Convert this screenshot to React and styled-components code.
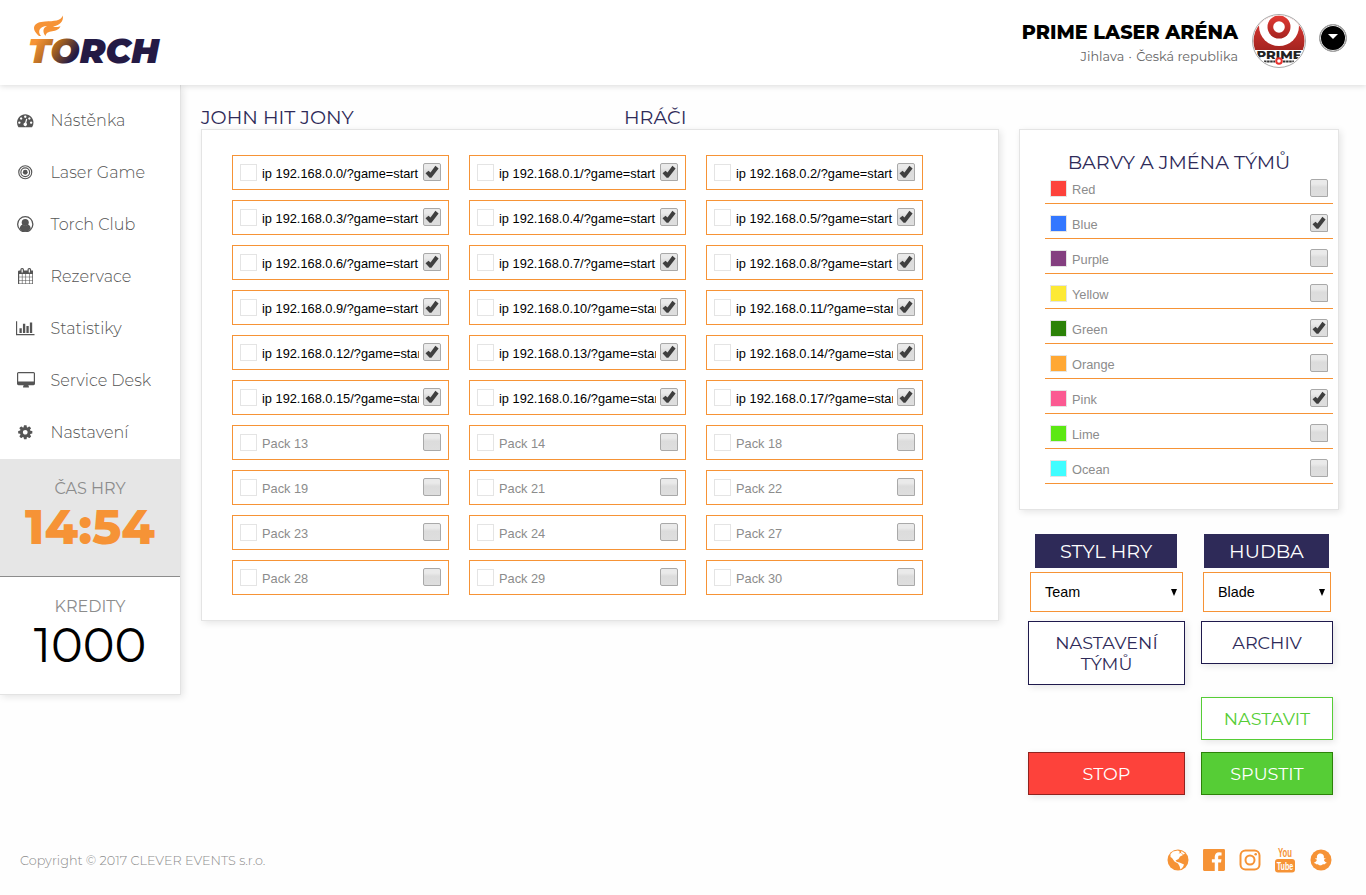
import React from 'react';
import styled, { createGlobalStyle } from 'styled-components';
import { FaSnapchatGhost } from 'react-icons/fa';

const GlobalStyle = createGlobalStyle`
  * { box-sizing: border-box; }
  body {
    margin: 0;
    background: #fefefe;
    font-family: Montserrat, Inter, sans-serif;
    font-size: 16px;
  }
`;

const arial = '"Liberation Sans", Arial, sans-serif';

const Page = styled.div`
  display: flex;
  flex-direction: column;
  height: 895px;
  overflow: hidden;
`;

const Header = styled.header`
  display: flex;
  flex: none;
  height: 85px;
  padding: 0 19px 0 28px;
  background: #fff;
  box-shadow: 0 1px 6px rgba(0, 0, 0, 0.15);
  z-index: 1;
`;

const Logo = styled.svg`
  width: 136px;
  height: 52px;
  margin-top: 14px;
  overflow: visible;
`;

const LogoText = styled.text`
  font: italic 900 34px Montserrat, Inter, sans-serif;
`;

const Venue = styled.div`
  margin: 20px 14px 0 auto;
  text-align: right;
`;

const VenueName = styled.div`
  font-size: 19.2px;
  line-height: 24px;
  font-weight: 800;
  color: #000;
`;

const VenuePlace = styled.div`
  margin-top: 5px;
  font-size: 12.8px;
  line-height: 16px;
  font-weight: 400;
  color: #666;
`;

const Dot = styled.span`
  margin: 0 1px;
`;

const Avatar = styled.svg`
  width: 54px;
  height: 54px;
  margin-top: 14px;
`;

const AvatarText = styled.text`
  font: 800 10.5px Montserrat, sans-serif;
`;

const MenuButton = styled.button`
  display: flex;
  justify-content: center;
  width: 28px;
  height: 28px;
  margin: 24px 0 0 13px;
  padding: 9px 0 0;
  border: 1px solid #aaa;
  border-radius: 50%;
  background: #000;
  box-shadow: inset 0 0 0 1px #e8e8e8;
`;

const Caret = styled.span`
  border: 5px solid transparent;
  border-top-color: #fff;
  border-bottom: 0;
  height: 0;
`;

const Body = styled.div`
  display: flex;
  align-items: flex-start;
  height: 752px;
`;

const Sidebar = styled.aside`
  width: 181px;
  flex: none;
  height: 610px;
  background: #fff;
  border: solid #e3e3e3;
  border-width: 0 1px 1px 0;
  box-shadow: 2px 2px 7px rgba(0, 0, 0, 0.1);
`;

const Nav = styled.nav`
  display: flex;
  flex-direction: column;
  height: 374px;
  padding-top: 9px;
`;

const NavItem = styled.a`
  display: flex;
  align-items: center;
  height: 52px;
  padding-top: 1px;
  color: #555;
  font-weight: 300;
  line-height: 21px;
`;

const NavIcon = styled.svg`
  width: ${(p) => p.$width}px;
  height: ${(p) => p.$height}px;
  margin: 0 ${(p) => 25 - p.$width / 2}px 1px ${(p) => 25.5 - p.$width / 2}px;
  fill: #555;
`;

const Stat = styled.section`
  height: ${(p) => (p.$active ? 118 : 117)}px;
  padding-top: 20px;
  text-align: center;
  background: ${(p) => (p.$active ? '#e6e6e6' : '#fff')};
  border-bottom: ${(p) => (p.$active ? '1px solid #8c8c8c' : '0')};
`;

const StatLabel = styled.div`
  line-height: 19px;
  font-size: 16px;
  color: #8c8c8c;
`;

const StatValue = styled.div`
  font-size: 48px;
  line-height: 58px;
  font-weight: ${(p) => (p.$bold ? 800 : 400)};
  color: ${(p) => (p.$bold ? '#f69336' : '#000')};
`;

const Main = styled.main`
  width: 798px;
  margin: 20px 20px 0 20px;
`;

const Heading = styled.h2`
  margin: 0;
  font-size: 19.2px;
  line-height: 24px;
  font-weight: 400;
  color: #2e2a58;
`;

const Titles = styled.div`
  display: grid;
  grid-template-columns: 423px 1fr;
`;

const Panel = styled.section`
  background: #fff;
  border: 1px solid #e4e4e4;
  box-shadow: 2px 2px 7px rgba(0, 0, 0, 0.1);
`;

const PackPanel = styled(Panel)`
  display: grid;
  grid-template-columns: repeat(3, 217px);
  grid-auto-rows: 35px;
  gap: 10px 20px;
  height: 492px;
  padding: 25px 30px;
`;

const Pack = styled.div`
  display: flex;
  align-items: center;
  padding: 0 7px;
  border: 1px solid #f69336;
`;

const Swatch = styled.span`
  flex: none;
  width: 17px;
  height: 17px;
  background: ${(p) => p.$color || '#fff'};
  border: 1px solid #e4e4e4;
`;

const ItemName = styled.span`
  flex: 1;
  overflow: hidden;
  margin: 2px 4px 0 5px;
  white-space: nowrap;
  font: 12.8px/18px ${arial};
  color: ${(p) => (p.$active ? '#000' : '#8c8c8c')};
`;

const Box = styled.span`
  flex: none;
  display: flex;
  width: 18px;
  height: 18px;
  margin-bottom: 2px;
  border: 1px solid #a9a9a9;
  border-radius: 2px;
  border-bottom-right-radius: 0;
  background: linear-gradient(#eaeaea 0%, #eaeaea 25%, #dcdcdc 45%, #dedede 100%);
`;

const Check = ({ on }) => (
  <Box>
    {on && (
      <svg width="16" height="16" viewBox="0 0 16 16" fill="#3f3f3f">
        <path d="M1.500 9.300 4.500 6.700 6.500 8.600 11.400 1.800 14.600 4.400 7.400 13.800H5.600Z" />
      </svg>
    )}
  </Box>
);

const Side = styled.aside`
  width: 320px;
  padding-top: 44px;
`;

const TeamPanel = styled(Panel)`
  height: 381px;
  padding: 20px 5px 0 25px;
`;

const TeamTitle = styled(Heading)`
  margin-right: 20px;
  height: 19px;
  text-align: center;
`;

const Team = styled.div`
  display: flex;
  align-items: center;
  height: 35px;
  padding: 5px 5px 0 5px;
  border-bottom: 1px solid #f69336;
`;

const Controls = styled.div`
  display: grid;
  grid-template-columns: 157px 132px;
  column-gap: 16px;
  margin: 24px 0 0 9px;
  align-items: start;
  justify-items: center;
`;

const Tag = styled.div`
  width: ${(p) => p.$width}px;
  height: 34px;
  margin: 0 1px 4px 0;
  text-align: center;
  font-size: 19.2px;
  line-height: 35px;
  color: #fff;
  background: #2e2a58;
`;

const Select = styled.div`
  display: flex;
  justify-content: space-between;
  align-items: center;
  width: ${(p) => p.$width}px;
  height: 40px;
  margin-bottom: 9px;
  padding: 0 5px 0 14px;
  border: 1px solid #f69336;
  background: #fff;
  font: 14.4px ${arial};
  color: #000;
`;

const Arrow = styled.svg`
  width: 6px;
  height: 7px;
`;

const tones = {
  navy: ['#fff', '#1f1a4d', '#2e2a58'],
  outline: ['#fff', '#56cd36', '#56cd36'],
  red: ['#fd423b', '#8f231f', '#fff'],
  green: ['#56cd36', '#2c8208', '#fff'],
};

const Button = styled.button`
  width: 100%;
  min-height: 43px;
  margin: 0 0 12px;
  padding: 10px 20px;
  font: 400 17.6px/21px Montserrat, Inter, sans-serif;
  background: ${(p) => tones[p.$tone][0]};
  border: 1px solid ${(p) => tones[p.$tone][1]};
  color: ${(p) => tones[p.$tone][2]};
  box-shadow: 2px 2px 7px rgba(0, 0, 0, 0.1);
  grid-column: ${(p) => p.$col || 'auto'};
`;

const Footer = styled.footer`
  display: flex;
  justify-content: space-between;
  padding: 8px 34px 0 20px;
  color: #8c8c8c;
  font-size: 12.8px;
  line-height: 32px;
  font-weight: 300;
`;

const Social = styled.div`
  display: flex;
  align-items: center;
  gap: 13.700px;
  height: 30px;
`;

const SocialIcon = styled.svg`
  width: 22px;
  height: 26px;
  fill: #f69336;
`;

const TubeText = styled.text`
  font: bold ${(p) => p.$size}px "Liberation Sans Narrow", ${arial};
`;

const icons = {
  dash: <path d="M384 1152q0-53-37.500-90.500t-90.500-37.500-90.500 37.500-37.500 90.500 37.500 90.500 90.500 37.500 90.500-37.500 37.500-90.500zm192-448q0-53-37.500-90.500t-90.500-37.500-90.500 37.500-37.500 90.500 37.500 90.500 90.500 37.500 90.500-37.500 37.500-90.500zm428 481l101-382q6-26-7.500-48.500t-38.500-29.500-48 6.500-30 39.500l-101 382q-60 5-107 43.500t-63 98.500q-20 77 20 146t117 89 146-20 89-117q16-60-6-117t-72-91zm660-33q0-53-37.500-90.500t-90.500-37.500-90.500 37.500-37.500 90.500 37.500 90.500 90.500 37.500 90.500-37.500 37.500-90.500zm-640-640q0-53-37.500-90.500t-90.500-37.500-90.500 37.500-37.500 90.500 37.500 90.500 90.500 37.500 90.500-37.500 37.500-90.500zm448 192q0-53-37.500-90.500t-90.500-37.500-90.500 37.500-37.500 90.500 37.500 90.500 90.500 37.500 90.500-37.500 37.500-90.500zm320 448q0 261-141 483-19 29-54 29h-1402q-35 0-54-29-141-221-141-483 0-182 71-348t191-286 286-191 348-71 348 71 286 191 191 286 71 348z" />,
  target: (
    <g fill="none" stroke="#555" strokeWidth="125">
      <circle cx="896" cy="896" r="705" />
      <circle cx="896" cy="896" r="475" />
      <circle cx="896" cy="896" r="260" fill="#555" stroke="none" />
    </g>
  ),
  user: (
    <g>
      <circle cx="896" cy="896" r="825" fill="none" stroke="#555" strokeWidth="140" />
      <circle cx="896" cy="704" r="385" />
      <path d="M300 1390q30-400 310-430 286 230 572 0 280 30 310 430-200 310-596 310t-596-310z" />
    </g>
  ),
  calendar: <path d="M192 1664h288v-288h-288v288zm352 0h320v-288h-320v288zm-352-352h288v-320h-288v320zm352 0h320v-320h-320v320zm-352-384h288v-288h-288v288zm736 736h320v-288h-320v288zm-384-736h320v-288h-320v288zm768 736h288v-288h-288v288zm-384-352h320v-320h-320v320zm-352-864v-288q0-13-9.500-22.500t-22.500-9.500h-64q-13 0-22.500 9.500t-9.500 22.500v288q0 13 9.500 22.500t22.500 9.500h64q13 0 22.500-9.500t9.500-22.500zm736 864h288v-320h-288v320zm-384-384h320v-288h-320v288zm384 0h288v-288h-288v288zm32-480v-288q0-13-9.500-22.500t-22.500-9.500h-64q-13 0-22.500 9.500t-9.500 22.500v288q0 13 9.500 22.500t22.500 9.500h64q13 0 22.500-9.500t9.500-22.500zm384-64v1280q0 52-38 90t-90 38h-1408q-52 0-90-38t-38-90v-1280q0-52 38-90t90-38h128v-96q0-66 47-113t113-47h64q66 0 113 47t47 113v96h384v-96q0-66 47-113t113-47h64q66 0 113 47t47 113v96h128q52 0 90 38t38 90z" />,
  chart: <path d="M640 896v512h-256v-512h256zm384-512v1024h-256v-1024h256zm1024 1152v128h-2048v-1536h128v1408h1920zm-640-896v768h-256v-768h256zm384-384v1152h-256v-1152h256z" />,
  desktop: <path d="M1728 992v-832q0-13-9.500-22.500t-22.500-9.500h-1600q-13 0-22.500 9.500t-9.500 22.500v832q0 13 9.500 22.500t22.500 9.500h1600q13 0 22.500-9.500t9.500-22.500zm128-832v1088q0 66-47 113t-113 47h-544q0 37 16 77.500t32 71 16 43.500q0 26-19 45t-45 19h-512q-26 0-45-19t-19-45q0-14 16-44t32-70 16-78h-544q-66 0-113-47t-47-113v-1088q0-66 47-113t113-47h1600q66 0 113 47t47 113z" />,
  cog: <path d="M1152 896q0-106-75-181t-181-75-181 75-75 181 75 181 181 75 181-75 75-181zm512-109v222q0 12-8 23t-20 13l-185 28q-19 54-39 91 35 50 107 138 10 12 10 25t-9 23q-27 37-99 108t-94 71q-12 0-26-9l-138-108q-44 23-91 38-16 136-29 186-7 28-36 28h-222q-14 0-24.500-8.500t-11.500-21.500l-28-184q-49-16-90-37l-141 107q-10 9-25 9-14 0-25-11-126-114-165-168-7-10-7-23 0-12 8-23 15-21 51-66.500t54-70.500q-27-50-41-99l-183-27q-13-2-21-12.500t-8-23.500v-222q0-12 8-23t19-13l186-28q14-46 39-92-40-57-107-138-10-12-10-24 0-10 9-23 26-36 98.500-107.500t94.500-71.500q13 0 26 10l138 107q44-23 91-38 16-136 29-186 7-28 36-28h222q14 0 24.500 8.500t11.500 21.500l28 184q49 16 90 37l142-107q9-9 24-9 13 0 25 10 129 119 165 170 7 8 7 22 0 12-8 23-15 21-51 66.500t-54 70.500q26 50 41 98l183 28q13 2 21 12.500t8 23.500z" />,
};

const nav = [
  ['Nástěnka', 'dash', '0 0 1792 1664', 16.5, 15.3],
  ['Laser Game', 'target', '0 0 1792 1792', 16.5, 16.5],
  ['Torch Club', 'user', '0 0 1792 1792', 16.5, 16.5],
  ['Rezervace', 'calendar', '64 0 1664 1792', 15.5, 16.7],
  ['Statistiky', 'chart', '0 0 2048 1792', 18.5, 16.5],
  ['Service Desk', 'desktop', '-64 0 1920 1664', 18, 15.6],
  ['Nastavení', 'cog', '0 0 1792 1792', 16.5, 16.5],
];

const packs = [
  ...Array.from({ length: 18 }, (_, i) => [`ip 192.168.0.${i}/?game=start`, true]),
  ...[13, 14, 18, 19, 21, 22, 23, 24, 27, 28, 29, 30].map((n) => [`Pack ${n}`, false]),
];

const teams = [
  ['Red', '#fd423b'],
  ['Blue', '#3377ff', true],
  ['Purple', '#843f80'],
  ['Yellow', '#fde935'],
  ['Green', '#2c8208', true],
  ['Orange', '#ffa834'],
  ['Pink', '#fb5a92', true],
  ['Lime', '#5ce813'],
  ['Ocean', '#40fdff'],
];

const TorchLogo = () => (
  <Logo viewBox="28 14 136 52">
    <defs>
      <linearGradient id="flame" gradientUnits="userSpaceOnUse" x1="38" y1="38" x2="74" y2="64">
        <stop offset="0" stopColor="#f69336" />
        <stop offset="0.45" stopColor="#a8641f" />
        <stop offset="0.9" stopColor="#241a44" />
      </linearGradient>
    </defs>
    <path fill="#f69336" d="M39 36C30 28 34 22 45 21.500 54 21 61 21 62.800 15.500 64 22 59 25.500 53 26.500 56 27.500 59 27 60.500 26 59 30.500 54 31 51 31.500 47 32 46 34 45.500 36 43 33 42 28 47 26 40 26.500 37 31 41 36Z" />
    <LogoText x="28" y="63" textLength="131" lengthAdjust="spacingAndGlyphs" fill="url(#flame)">TORCH</LogoText>
  </Logo>
);

const PrimeAvatar = () => (
  <Avatar viewBox="0 0 54 54">
    <defs>
      <clipPath id="disc"><circle cx="27" cy="27" r="25.500" /></clipPath>
      <linearGradient id="red" x1="0" y1="0" x2="0" y2="1">
        <stop offset="0" stopColor="#e23a34" />
        <stop offset="1" stopColor="#a52420" />
      </linearGradient>
    </defs>
    <circle cx="27" cy="27" r="26.500" fill="#fff" stroke="#aaa" />
    <g clipPath="url(#disc)">
      <rect width="54" height="36" fill="url(#red)" />
      <circle cx="27" cy="12" r="20" fill="#fff" />
      <path d="M8 0H46V12H8Z" fill="#fff" />
      <circle cx="27" cy="13" r="11.500" fill="url(#red)" />
      <circle cx="27" cy="13" r="5.800" fill="#fff" />
      <AvatarText x="4.500" y="45.300" textLength="45" lengthAdjust="spacingAndGlyphs" fill="#222">PRIME</AvatarText>
      <path d="M12 47.500H23M31 47.500H42" stroke="#333" strokeWidth="2" strokeDasharray="2.500 0.600" />
    </g>
    <circle cx="27" cy="47" r="2.800" fill="#fff" stroke="#e8332e" strokeWidth="2" />
  </Avatar>
);

export default function App() {
  return (
    <Page>
      <GlobalStyle />
      <Header>
        <TorchLogo />
        <Venue>
          <VenueName>PRIME LASER ARÉNA</VenueName>
          <VenuePlace>Jihlava <Dot>·</Dot> Česká republika</VenuePlace>
        </Venue>
        <PrimeAvatar />
        <MenuButton><Caret /></MenuButton>
      </Header>
      <Body>
        <Sidebar>
          <Nav>
            {nav.map(([label, icon, box, width, height]) => (
              <NavItem key={label}>
                <NavIcon $width={width} $height={height} viewBox={box}>{icons[icon]}</NavIcon>
                {label}
              </NavItem>
            ))}
          </Nav>
          <Stat $active>
            <StatLabel>ČAS HRY</StatLabel>
            <StatValue $bold>14:54</StatValue>
          </Stat>
          <Stat>
            <StatLabel>KREDITY</StatLabel>
            <StatValue>1000</StatValue>
          </Stat>
        </Sidebar>
        <Main>
          <Titles>
            <Heading>JOHN HIT JONY</Heading>
            <Heading>HRÁČI</Heading>
          </Titles>
          <PackPanel>
            {packs.map(([name, on]) => (
              <Pack key={name}>
                <Swatch />
                <ItemName $active={on}>{name}</ItemName>
                <Check on={on} />
              </Pack>
            ))}
          </PackPanel>
        </Main>
        <Side>
          <TeamPanel>
            <TeamTitle>BARVY A JMÉNA TÝMŮ</TeamTitle>
            {teams.map(([name, color, on]) => (
              <Team key={name}>
                <Swatch $color={color} />
                <ItemName>{name}</ItemName>
                <Check on={on} />
              </Team>
            ))}
          </TeamPanel>
          <Controls>
            <Tag $width={142}>STYL HRY</Tag>
            <Tag $width={125}>HUDBA</Tag>
            <Select $width={153}>Team<Arrow viewBox="0 0 6 7"><path d="M0 0H6L3 7Z" /></Arrow></Select>
            <Select $width={128}>Blade<Arrow viewBox="0 0 6 7"><path d="M0 0H6L3 7Z" /></Arrow></Select>
            <Button $tone="navy">NASTAVENÍ TÝMŮ</Button>
            <Button $tone="navy">ARCHIV</Button>
            <Button $tone="outline" $col="2">NASTAVIT</Button>
            <Button $tone="red" $col="1">STOP</Button>
            <Button $tone="green">SPUSTIT</Button>
          </Controls>
        </Side>
      </Body>
      <Footer>
        <span>Copyright © 2017 CLEVER EVENTS s.r.o.</span>
        <Social>
          <SocialIcon viewBox="0 0 22 26">
            <circle cx="11" cy="13" r="10.500" />
            <path fill="#fff" d="M3.500 7 6 4.500 11 3.500 13 5 11.500 6.500 14 6 16 8 13 9.500 11.500 12 8.500 13.500 10 15 12.500 15.500 17 17.500 16 20 13.500 22.500 12.500 19 11 16.500 7.500 14.500 5 11 3.500 10ZM14.500 4 18 6.500 16.500 7.500 14 5.500Z" />
          </SocialIcon>
          <SocialIcon viewBox="128 -12 1536 1820">
            <path d="M1579 128q35 0 60 25t25 60v1366q0 35-25 60t-60 25h-391v-595h199l30-232h-229v-148q0-56 23.500-84t91.500-28l122-1v-207q-63-9-178-9-136 0-217.500 80t-81.500 226v171h-200v232h200v595h-735q-35 0-60-25t-25-60v-1366q0-35 25-60t60-25h1366z" />
          </SocialIcon>
          <SocialIcon viewBox="0 0 22 26">
            <g fill="none" stroke="#f69336" strokeWidth="2">
              <rect x="1.500" y="3.500" width="19" height="19" rx="5" />
              <circle cx="11" cy="13" r="4.500" />
            </g>
            <circle cx="16.700" cy="7.300" r="1.300" />
          </SocialIcon>
          <SocialIcon viewBox="0 0 22 26">
            <rect x="1" y="12" width="20" height="13.500" rx="3" />
            <TubeText $size={12.5} x="4" y="10" textLength="14" lengthAdjust="spacingAndGlyphs">You</TubeText>
            <TubeText $size={11.5} x="2.800" y="23" textLength="16.500" lengthAdjust="spacingAndGlyphs" fill="#fff">Tube</TubeText>
          </SocialIcon>
          <SocialIcon viewBox="0 0 22 26">
            <circle cx="11" cy="13" r="10.500" />
            <FaSnapchatGhost x="4" y="6" width="14" height="14" color="#fff" fill="#fff" />
          </SocialIcon>
        </Social>
      </Footer>
    </Page>
  );
}
